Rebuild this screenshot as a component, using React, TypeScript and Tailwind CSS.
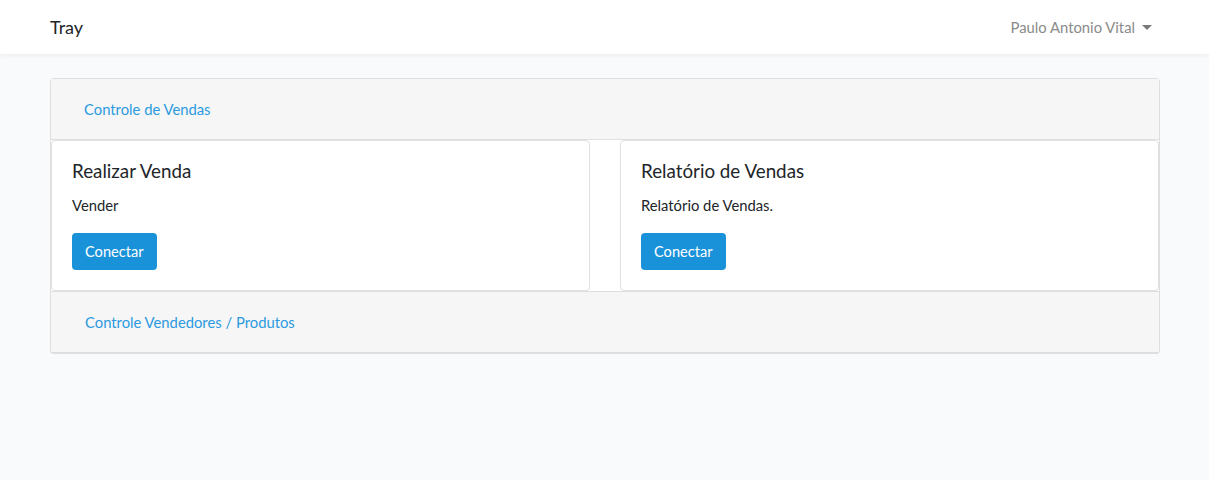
const font = "font-['Lato','Noto_Sans',sans-serif]";

const CardItem = ({ title, text }: { title: string; text: string }) => {
  return (
    <div className="flex-1 border border-[#e0e0e0] rounded bg-white px-5 pt-[19px] pb-5">
      <h5 className="text-[18.8px] leading-[22px] text-[#212529]">{title}</h5>
      <p className="mt-[12px] text-[14.8px] leading-[22px] text-[#212529]">{text}</p>
      <button className="mt-[17px] h-[37px] px-[13px] rounded bg-[#1a92da] text-white text-[14.6px]">
        Conectar
      </button>
    </div>
  );
};

const App = () => {
  return (
    <div className={`min-h-screen bg-[#f8fafc] ${font}`}>
      <nav className="h-[54px] bg-white shadow-[0_2px_4px_rgba(0,0,0,0.05)] flex items-center justify-between px-[50px]">
        <span className="text-[18px] text-[#212529]">Tray</span>
        <div className="flex items-center gap-[7px] pr-[7px] text-[14.8px] text-[#8a8a8a]">
          Paulo Antonio Vital
          <span className="w-0 h-0 border-l-[5px] border-r-[5px] border-t-[5px] border-l-transparent border-r-transparent border-t-[#7a7a7a]" />
        </div>
      </nav>
      <main className="pt-6 pl-[50px] pr-[49px]">
        <div className="border border-[#dedede] border-b-2 rounded bg-white">
          <div className="h-[61px] bg-[#f6f6f6] border-b border-[#e0e0e0] flex items-center pl-[33px]">
            <a className="text-[14.8px] text-[#2b9ae0]">Controle de Vendas</a>
          </div>
          <div className="flex gap-[30px]">
            <CardItem title="Realizar Venda" text="Vender" />
            <CardItem title="Relatório de Vendas" text="Relatório de Vendas." />
          </div>
          <div className="h-[61px] bg-[#f6f6f6] border-t border-[#dedede] flex items-center pl-[34px]">
            <a className="text-[14.8px] text-[#2b9ae0]">Controle Vendedores / Produtos</a>
          </div>
        </div>
      </main>
    </div>
  );
};

export default App;
